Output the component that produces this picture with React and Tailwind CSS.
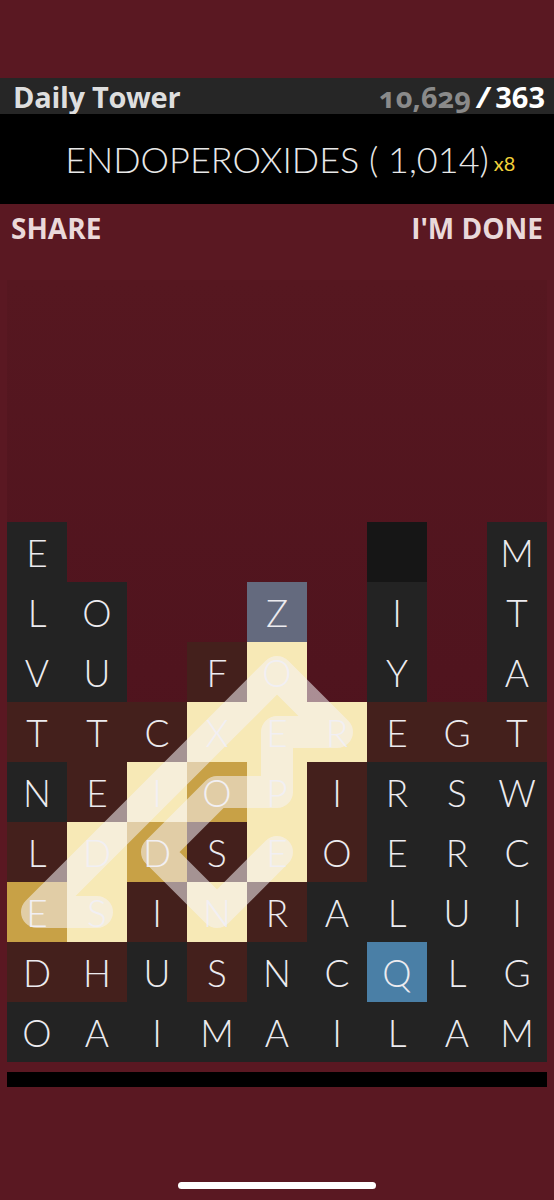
import React from 'react';

const DARK = 'bg-[#232323]';
const BROWN = 'bg-[#44201c]';
const CREAM = 'bg-[#f7e9b6]';
const GOLD = 'bg-[#c8a146]';
const BLUE = 'bg-[#4a7fa6]';
const SLATE = 'bg-[#646a7e]';
const BLACK = 'bg-[#161616]';

// [letter, colour] per cell, null = empty slot
const d = (l) => [l, DARK];
const b = (l) => [l, BROWN];
const c = (l) => [l, CREAM];
const g = (l) => [l, GOLD];

const grid = [
  [d('E'), null, null, null, null, null, ['', BLACK], null, d('M')],
  [d('L'), d('O'), null, null, ['Z', SLATE], null, d('I'), null, d('T')],
  [d('V'), d('U'), null, b('F'), c('O'), null, d('Y'), null, d('A')],
  [b('T'), b('T'), b('C'), c('X'), c('E'), c('R'), b('E'), b('G'), b('T')],
  [d('N'), b('E'), c('I'), g('O'), c('P'), b('I'), d('R'), d('S'), d('W')],
  [b('L'), c('D'), g('D'), b('S'), c('E'), b('O'), d('E'), d('R'), d('C')],
  [g('E'), c('S'), b('I'), c('N'), b('R'), d('A'), d('L'), d('U'), d('I')],
  [b('D'), b('H'), d('U'), b('S'), d('N'), d('C'), ['Q', BLUE], d('L'), d('G')],
  [d('O'), d('A'), d('I'), d('M'), d('A'), d('I'), d('L'), d('A'), d('M')],
];

// ENDOPEROXIDES traced through the board, [row, col]
const path = [
  [5, 4], [6, 3], [5, 2], [4, 3], [4, 4], [3, 4], [3, 5],
  [2, 4], [3, 3], [4, 2], [5, 1], [6, 0], [6, 1],
];

const thin = { fontFamily: 'Lato, "DejaVu Sans", sans-serif' };
const bold = { fontFamily: '"Open Sans", "Liberation Sans", sans-serif' };

const Cell = ({ cell }) => {
  if (!cell) return <div className="w-[60px] h-[60px]" />;
  const [letter, bg] = cell;
  return (
    <div
      className={`w-[60px] h-[60px] flex items-center justify-center text-[37px] font-light leading-none text-[#ecebef] ${bg}`}
      style={thin}
    >
      {letter}
    </div>
  );
};

const Board = () => {
  const points = path.map(([r, col]) => `${col * 60 + 30},${r * 60 + 30}`).join(' ');
  return (
    <div className="relative grid grid-cols-9 w-[540px]">
      {grid.flat().map((cell, i) => (
        <Cell key={i} cell={cell} />
      ))}
      <svg className="absolute inset-0 pointer-events-none" width="540" height="540" viewBox="0 0 540 540">
        <polyline
          points={points}
          fill="none"
          stroke="#f6f2f6"
          strokeOpacity="0.55"
          strokeWidth="32"
          strokeLinecap="round"
          strokeLinejoin="round"
        />
      </svg>
    </div>
  );
};

export default function App() {
  return (
    <div className="w-[554px] h-[1200px] bg-[#5a1822] flex flex-col overflow-hidden">
      <div className="h-[78px]" />
      <div className="h-[36px] bg-[#262626] flex items-center justify-between pl-[13px] pr-[9px]" style={bold}>
        <span className="text-[29px] font-bold text-[#dedede] leading-none tracking-[-0.3px]">Daily Tower</span>
        <span className="text-[29px] font-bold leading-none flex items-baseline gap-[6px]">
          <span className="text-[#8a8a8a] [font-variant-numeric:oldstyle-nums]">10,629</span>
          <span className="text-white italic">/</span>
          <span className="text-white">363</span>
        </span>
      </div>
      <div className="h-[90px] bg-black flex items-center justify-center">
        <span className="relative text-[36px] font-light text-[#e8e8e8] leading-none" style={thin}>
          ENDOPEROXIDES ( 1,014)
          <span className="absolute left-full bottom-[4px] ml-[5px] text-[20px] font-normal text-[#f2d03a]">x8</span>
        </span>
      </div>
      <div className="h-[48px] flex items-center justify-between px-[11px] text-[28px] font-bold text-[#ead9da] leading-none" style={bold}>
        <span>SHARE</span>
        <span>I'M DONE</span>
      </div>
      <div className="mt-[28px] mx-[7px] h-[782px] bg-gradient-to-b from-[#561720] to-[#4a111c] flex flex-col justify-end">
        <Board />
      </div>
      <div className="mt-[10px] mx-[7px] h-[15px] bg-black" />
      <div className="mt-[95px] mx-auto w-[198px] h-[7px] rounded-full bg-white" />
    </div>
  );
}
